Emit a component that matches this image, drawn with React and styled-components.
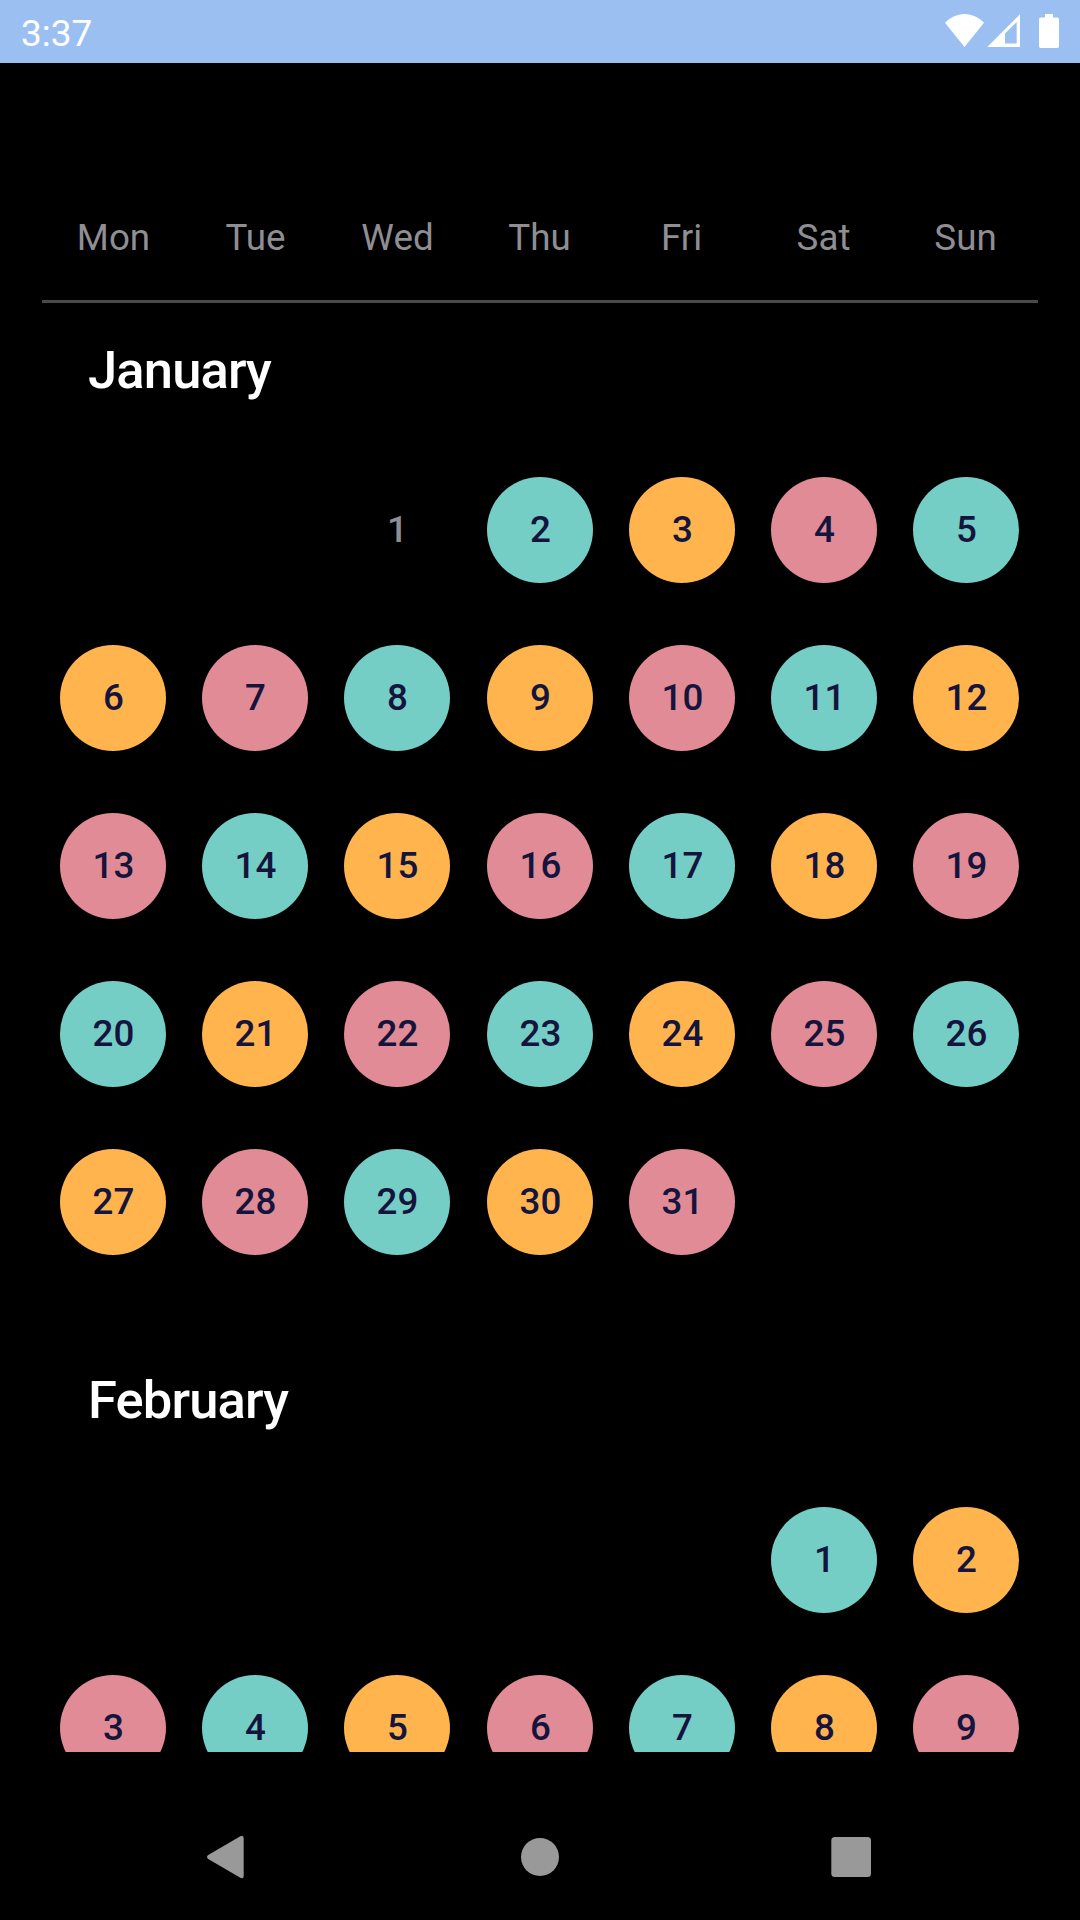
import React from "react";
import styled, { createGlobalStyle } from "styled-components";

const GlobalStyle = createGlobalStyle`
  * { box-sizing: border-box; }
  body {
    margin: 0;
    background: #000;
    font-family: Roboto, "Liberation Sans", sans-serif;
  }
`;

const palette = {
  teal: "#74cec5",
  orange: "#ffb44e",
  pink: "#e18b96",
};
const cycle = [palette.teal, palette.orange, palette.pink];

const Screen = styled.div`
  width: 1080px;
  height: 1920px;
  display: flex;
  flex-direction: column;
  overflow: hidden;
  background: #000;
`;

const StatusBar = styled.header`
  flex: none;
  height: 63px;
  padding: 0 21px;
  display: flex;
  justify-content: space-between;
  background: #9cbff2;
  color: #fff;
`;

const Clock = styled.span`
  font-size: 37px;
  line-height: 67px;
`;

const StatusIcons = styled.svg`
  display: block;
  width: 114px;
  height: 63px;
`;

const Weekdays = styled.div`
  flex: none;
  height: 240px;
  margin: 0 42px;
  padding: 154px 0 0 0.5px;
  display: grid;
  grid-template-columns: repeat(7, 142px);
  border-bottom: 3px solid #4a4a4a;
`;

const Weekday = styled.span`
  font-size: 36.75px;
  line-height: 42px;
  text-align: center;
  color: #8e8e93;
`;

const MonthList = styled.main`
  flex: none;
  height: 1449px;
  padding: 0 42px;
  overflow: hidden;
`;

const Month = styled.section`
  height: 1030px;
`;

const MonthTitle = styled.h2`
  margin: 0;
  padding: 36px 0 0 46px;
  height: 174px;
  font-size: 52.5px;
  line-height: 62px;
  font-weight: 500;
  letter-spacing: -0.85px;
  color: #fff;
`;

const Days = styled.div`
  padding-left: 18px;
  display: grid;
  grid-template-columns: 142px 142px 143px repeat(4, 142px);
  grid-auto-rows: 106px;
  row-gap: 62px;
`;

const Day = styled.span`
  grid-column-start: ${(p) => p.$column || "auto"};
  width: 106px;
  height: 106px;
  padding: 0 0 2px 1px;
  display: flex;
  align-items: center;
  justify-content: center;
  border-radius: 50%;
  background: ${(p) => p.$fill || "transparent"};
  color: ${(p) => (p.$fill ? "#14143c" : "#8e8e93")};
  font-size: 36.75px;
  font-weight: 500;
`;

const NavBar = styled.nav`
  flex: 1;
  padding: 42px 0 0;
  display: flex;
  justify-content: center;
`;

const NavIcons = styled.svg`
  display: block;
  width: 1080px;
  height: 126px;
`;

// February is rendered only down to the last week in view.
const months = [
  { name: "January", startColumn: 3, lastDay: 31, plain: 1 },
  { name: "February", startColumn: 6, lastDay: 9, plain: 0 },
];
const weekdays = ["Mon", "Tue", "Wed", "Thu", "Fri", "Sat", "Sun"];

function MonthView({ name, startColumn, lastDay, plain }) {
  const days = Array.from({ length: lastDay }, (_, i) => i + 1);
  return (
    <Month>
      <MonthTitle>{name}</MonthTitle>
      <Days>
        {days.map((day) => (
          <Day
            key={day}
            $column={day === 1 ? startColumn : undefined}
            $fill={day > plain ? cycle[(day - plain - 1) % 3] : undefined}
          >
            {day}
          </Day>
        ))}
      </Days>
    </Month>
  );
}

export default function App() {
  return (
    <Screen>
      <GlobalStyle />
      <StatusBar>
        <Clock>3:37</Clock>
        <StatusIcons viewBox="945 0 114 63" fill="#fff">
          <path d="M964.5 47 945 22.8C950 17.5 957 14 964.5 14S979 17.5 984 22.8Z" />
          <path
            fillRule="evenodd"
            d="M987.3 47 1020 14.3V47ZM1005 33.5V43.5H1016.7V22Z"
          />
          <path d="M1045 14H1053V17.5H1057.3Q1059 17.5 1059 19.2V46.2Q1059 48 1057.3 48H1040.7Q1039 48 1039 46.2V19.2Q1039 17.5 1040.7 17.5H1045Z" />
        </StatusIcons>
      </StatusBar>
      <Weekdays>
        {weekdays.map((day) => (
          <Weekday key={day}>{day}</Weekday>
        ))}
      </Weekdays>
      <MonthList>
        {months.map((month) => (
          <MonthView key={month.name} {...month} />
        ))}
      </MonthList>
      <NavBar>
        <NavIcons viewBox="0 1794 1080 126" fill="#999">
          <path d="M207.8 1855.2 240.3 1836.3Q243.7 1834.7 243.7 1838.5V1875.5Q243.7 1879.3 240.3 1877.7L207.8 1858.8Q206 1857 207.8 1855.2Z" />
          <circle cx="540" cy="1857" r="19" />
          <rect x="831.3" y="1837" width="39.7" height="40" rx="3.5" />
        </NavIcons>
      </NavBar>
    </Screen>
  );
}
